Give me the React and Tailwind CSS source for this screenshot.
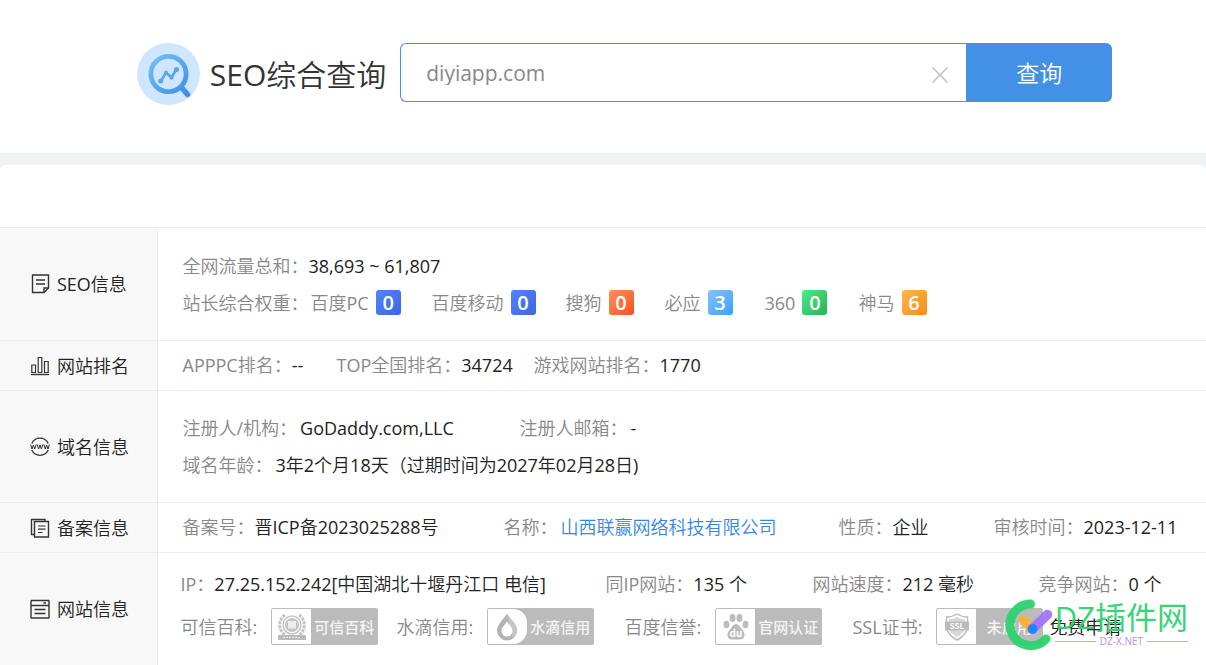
import { X } from 'lucide-react';

const weights = [
  { name: '百度PC', value: 0, color: 'from-[#5484fb] to-[#3a66e4]' },
  { name: '百度移动', value: 0, color: 'from-[#5484fb] to-[#3a66e4]' },
  { name: '搜狗', value: 0, color: 'from-[#fb9159] to-[#fb4a1e]' },
  { name: '必应', value: 3, color: 'from-[#82c4fd] to-[#389ffd]' },
  { name: '360', value: 0, color: 'from-[#50ea86] to-[#1fb458]' },
  { name: '神马', value: 6, color: 'from-[#fdb84a] to-[#fd8b07]' },
];

function Logo() {
  return (
    <svg className="h-[62px] w-[63px] shrink-0" viewBox="0 0 63 62" fill="none">
      <defs>
        <linearGradient id="lens" x1="12" y1="12" x2="52" y2="54" gradientUnits="userSpaceOnUse">
          <stop stopColor="#72c4f5" />
          <stop offset="1" stopColor="#3d8be8" />
        </linearGradient>
      </defs>
      <ellipse cx="31.5" cy="31" rx="31.5" ry="31" fill="#d0e6fe" />
      <g stroke="url(#lens)" strokeLinecap="round" strokeLinejoin="round">
        <circle cx="31.5" cy="31" r="17.6" strokeWidth="4.8" />
        <path d="M45 45l5.500 6.500" strokeWidth="5.500" />
        <path d="M24 38l5-8.500 5.500 5L39.500 26" strokeWidth="2.600" />
      </g>
      <g fill="#59a6ee">
        <circle cx="23.700" cy="38" r="2.500" />
        <circle cx="29" cy="29.500" r="2" />
        <circle cx="34.500" cy="34.800" r="2" />
        <circle cx="39.500" cy="26.500" r="2.500" />
      </g>
    </svg>
  );
}

function Icon({ children }) {
  return (
    <svg className="size-5 shrink-0" viewBox="0 0 20 20" fill="none" stroke="#333" strokeWidth="1.4">
      {children}
    </svg>
  );
}

const icons = {
  note: (
    <Icon>
      <path d="M2.500 1h16v13l-4.500 4.500H2.500z" />
      <path d="M18.500 14H14v4.500M6 6h9M6 10h9" />
    </Icon>
  ),
  chart: (
    <Icon>
      <path d="M1 18.500h18" />
      <path d="M1.800 9h3.700v7.500H1.800zM8.200 1.500h3.600v15H8.200zM14.500 5.500h3.700v11h-3.700z" strokeWidth="1.200" />
    </Icon>
  ),
  www: (
    <Icon>
      <path d="M1.800 6.500a9 9 0 0 1 16.400 0M1.800 13a9 9 0 0 0 16.400 0" strokeWidth="1.300" />
      <path
        d="M.6 7.500l1.400 4.500 1.400-4L4.800 12l1.400-4.500M7.200 7.500l1.400 4.500L10 8l1.400 4 1.400-4.500M13.800 7.500l1.400 4.500 1.400-4L18 12l1.400-4.500"
        strokeWidth="1"
      />
    </Icon>
  ),
  record: (
    <Icon>
      <path d="M4.500 16.500h-3v-15h13.500v2" />
      <path d="M4.500 3.500h14v15.500h-14z" />
      <path d="M8 8h7.500M8 11.200h7.500M8 14.500h4.500" strokeWidth="1.200" />
    </Icon>
  ),
  site: (
    <Icon>
      <rect x="1" y="1.500" width="18" height="17.500" rx=".5" />
      <path d="M1 6.500h18M4.500 10.500h11M4.500 14.500h11M13.500 4h2.500" />
    </Icon>
  ),
};

function Row({ icon, title, children, className }) {
  return (
    <tr className="border-t border-[#ececec]">
      <th scope="row" className="w-[157px] border-r border-[#ececec] bg-[#f8f8f8] p-0 text-left font-normal text-[#222]">
        <div className="flex items-center gap-[7px] pl-[30px]">
          {icon}
          {title}
        </div>
      </th>
      <td className={`relative p-0 pl-[25px] ${className}`}>{children}</td>
    </tr>
  );
}

function Line({ cols = 'grid-cols-1', children }) {
  return <div className={`grid h-[37px] items-center ${cols}`}>{children}</div>;
}

function Item({ label, children, gap = '' }) {
  return (
    <div className={`flex items-center ${gap}`}>
      <span className="text-[#888]">{label}</span>
      <span className="text-[#222]">{children}</span>
    </div>
  );
}

function Cert({ label, text, icon, rounded }) {
  return (
    <div className="flex items-center gap-[14px]">
      <span className="text-[#888]">{label}</span>
      <a
        href="#"
        className="flex h-[37px] w-[107px] items-center overflow-hidden rounded-[2px] border border-[#bbb] bg-[#bbb] font-['Noto_Sans_CJK_SC',sans-serif] text-[15px] font-medium text-[#f4f4f4]"
      >
        <span className={`flex h-full w-[39px] shrink-0 items-center justify-center bg-white ${rounded ? 'rounded-r-[14px]' : ''}`}>
          <svg className="size-[30px]" viewBox="0 0 30 30" fill="none">
            {icon}
          </svg>
        </span>
        <span className="flex-1 text-center">{text}</span>
      </a>
    </div>
  );
}

const certIcons = {
  wiki: (
    <>
      <path d="M8 3a12 12 0 0 0 0 20M22 3a12 12 0 0 1 0 20" stroke="#c4c4c4" strokeWidth="3" strokeDasharray="3 1" />
      <circle cx="15" cy="13" r="9" stroke="#c4c4c4" strokeWidth="1.500" />
      <circle cx="15" cy="13" r="7" fill="#c4c4c4" />
      <path d="M11 9h3.500l.5.800.5-.8H19v7.500h-3.500l-.5.800-.5-.8H11z" fill="#eee" />
      <path d="M1 23h28v5H1z" fill="#bbb" />
      <path d="M6 25.500h18" stroke="#eee" strokeWidth="1.200" strokeDasharray="2 1" />
    </>
  ),
  drop: (
    <>
      <path d="M14 1.500C11 7 4 12 4 18.500a10 10 0 0 0 20 0C24 12 17 7 14 1.500z" fill="#b3b3b3" />
      <path d="M14 1.500C17 7 24 12 24 18.500a10 10 0 0 1-4 8z" fill="#c6c6c6" />
      <path d="M14 9.500c-1.500 3-5.500 5.500-5.500 9.500a5.500 5.500 0 0 0 11 0c0-4-4-6.500-5.500-9.500z" fill="#fff" />
    </>
  ),
  paw: (
    <>
      <g fill="#bbb">
        <ellipse cx="5.500" cy="12.500" rx="3" ry="3.800" />
        <ellipse cx="11.500" cy="6" rx="3" ry="4" />
        <ellipse cx="18.500" cy="6" rx="3" ry="4" />
        <ellipse cx="24.500" cy="12.500" rx="3" ry="3.800" />
        <path d="M15 12c-3 0-4 3.500-6.500 6-3 2.800-3 9.500 2.500 9.500h8c5.500 0 5.500-6.700 2.500-9.500-2.500-2.500-3.500-6-6.500-6z" />
      </g>
      <text x="15" y="25" textAnchor="middle" fontSize="10" fontWeight="600" fill="#fff">du</text>
    </>
  ),
  ssl: (
    <>
      <path d="M15 2c3 2 6.500 3 10.500 3v9c0 7-5 11-10.500 14C9.500 25 4.500 21 4.500 14V5C8.500 5 12 4 15 2z" stroke="#bbb" strokeWidth="1.500" />
      <path d="M15 5c2.500 1.500 5 2 8 2.200V14c0 5.500-3.500 8.500-8 11-4.500-2.500-8-5.500-8-11V7.200C10 7 12.500 6.500 15 5z" fill="#d8d8d8" />
      <path d="M3 9.500h24v9H3z" fill="#bbb" />
      <text x="15" y="17" textAnchor="middle" fontSize="8" fontWeight="700" fill="#fff">SSL</text>
    </>
  ),
};

function Watermark() {
  return (
    <div className="pointer-events-none absolute top-[46px] right-[18px] flex items-start gap-[2px] text-[#2dd36f] opacity-95">
      <svg className="h-[52px] w-[48px]" viewBox="0 0 48 52" fill="none" strokeLinecap="round">
        <path d="M25.500 5A20.800 20.800 0 1 0 41 40" stroke="#2dd36f" strokeWidth="9" />
        <path d="M18.500 21.500l8 8" stroke="#ffb02e" strokeWidth="9.500" />
        <path d="M27.500 30L42.500 15.500" stroke="#a175ff" strokeWidth="9.500" />
        <circle cx="27.500" cy="30" r="4.900" fill="#1683ff" />
      </svg>
      <div>
        <div className="font-['Open_Sans','Noto_Sans_CJK_SC',sans-serif] text-[31px] leading-9 whitespace-nowrap">DZ插件网</div>
        <div className="flex items-center gap-1 text-[10px] leading-3 text-[#ab8dfa]">
          <span className="h-px flex-1 bg-[#b9a2fa]" />
          DZ-X.NET
          <span className="h-px flex-1 bg-[#b9a2fa]" />
        </div>
      </div>
    </div>
  );
}

export default function App() {
  return (
    <div className="bg-[#eff3f6] font-['Open_Sans','Noto_Sans_CJK_SC_DemiLight','Noto_Sans_CJK_SC',sans-serif] text-[18px] leading-6 whitespace-nowrap">
      <header className="flex items-start justify-center bg-white pt-[43px] pb-[46px] pl-[43px]">
        <Logo />
        <h1 className="ml-[10px] text-[30px] leading-[64px] text-[#333]">SEO综合查询</h1>
        <form className="ml-[14px] flex h-[59px] w-[712px]" onSubmit={(e) => e.preventDefault()}>
          <div className="flex flex-1 items-center rounded-l-md border border-r-0 border-[#4291e7] pr-3 pl-[25px]">
            <input
              type="text"
              aria-label="域名"
              defaultValue="diyiapp.com"
              className="min-w-0 flex-1 text-[21px] text-[#888] outline-none"
            />
            <button type="button" aria-label="清空" className="mt-1 text-[#bbb]">
              <X className="size-7" strokeWidth={1.2} />
            </button>
          </div>
          <button type="submit" className="w-[146px] rounded-r-md bg-[#4291e7] text-[23px] text-white">
            查询
          </button>
        </form>
      </header>

      <main className="mt-3 rounded-t-md bg-white pt-[62px]">
        <table className="w-full border-collapse">
          <tbody>
            <Row icon={icons.note} title="SEO信息" className="py-[19px]">
              <Line>
                <Item label="全网流量总和：">38,693 ~ 61,807</Item>
              </Line>
              <Line cols="grid-cols-[128px_121px_134px_99px_100px_94px_auto]">
                <span className="text-[#888]">站长综合权重：</span>
                {weights.map((w) => (
                  <div key={w.name} className="flex items-center gap-[7px] text-[#888]">
                    {w.name}
                    <span
                      className={`flex size-[25px] items-center justify-center rounded-[3px] bg-linear-to-br text-[20px] font-semibold text-white ${w.color}`}
                    >
                      {w.value}
                    </span>
                  </div>
                ))}
              </Line>
            </Row>

            <Row icon={icons.chart} title="网站排名" className="pt-[5px] pb-[7px]">
              <Line cols="grid-cols-[154px_197px_auto]">
                <Item label="APPPC排名：">--</Item>
                <Item label="TOP全国排名：">34724</Item>
                <Item label="游戏网站排名：">1770</Item>
              </Line>
            </Row>

            <Row icon={icons.www} title="域名信息" className="pt-[18px] pb-[19px]">
              <Line cols="grid-cols-[337px_auto]">
                <Item label="注册人/机构：" gap="gap-[3px]">GoDaddy.com,LLC</Item>
                <Item label="注册人邮箱：" gap="gap-[3px]">-</Item>
              </Line>
              <Line>
                <Item label="域名年龄：" gap="gap-[3px]">3年2个月18天（过期时间为2027年02月28日)</Item>
              </Line>
            </Row>

            <Row icon={icons.record} title="备案信息" className="pt-[5px] pb-[7px]">
              <Line cols="grid-cols-[321px_335px_155px_auto]">
                <Item label="备案号：">晋ICP备2023025288号</Item>
                <Item label="名称：" gap="gap-[3px]">
                  <a href="#" className="text-[#3587e4]">山西联赢网络科技有限公司</a>
                </Item>
                <Item label="性质：">企业</Item>
                <Item label="审核时间：">2023-12-11</Item>
              </Line>
            </Row>

            <Row icon={icons.site} title="网站信息" className="pt-3 pb-5">
              <div className="-ml-[2px] flex flex-col gap-[6px]">
                <Line cols="grid-cols-[425px_207px_226px_auto]">
                  <Item label="IP：">27.25.152.242[中国湖北十堰丹江口 电信]</Item>
                  <Item label="同IP网站：">135 个</Item>
                  <Item label="网站速度：">212 毫秒</Item>
                  <Item label="竞争网站：">0 个</Item>
                </Line>
                <Line cols="grid-cols-[216px_228px_228px_auto]">
                  <Cert label="可信百科:" text="可信百科" icon={certIcons.wiki} />
                  <Cert label="水滴信用:" text="水滴信用" icon={certIcons.drop} rounded />
                  <Cert label="百度信誉:" text="官网认证" icon={certIcons.paw} />
                  <div className="flex items-center gap-[6px]">
                    <Cert label="SSL证书:" text="未启用" icon={certIcons.ssl} />
                    <a href="#" className="text-[#222]">免费申请</a>
                  </div>
                </Line>
              </div>
              <Watermark />
            </Row>
          </tbody>
        </table>
      </main>
    </div>
  );
}
